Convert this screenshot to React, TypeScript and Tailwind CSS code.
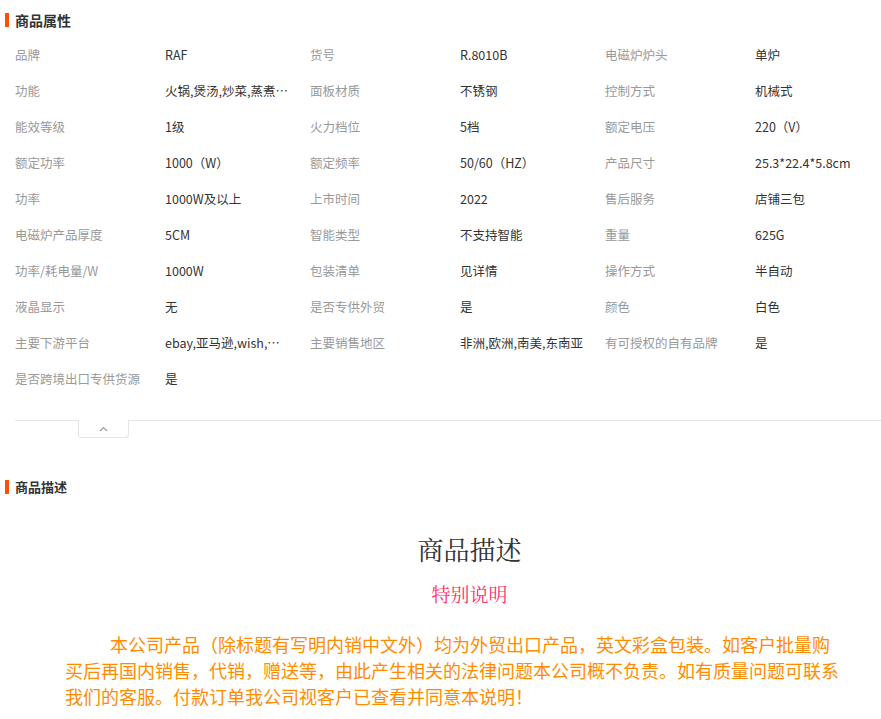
import React from 'react';

const rows: string[][] = [
  ['品牌', 'RAF', '货号', 'R.8010B', '电磁炉炉头', '单炉'],
  ['功能', '火锅,煲汤,炒菜,蒸煮,烧水', '面板材质', '不锈钢', '控制方式', '机械式'],
  ['能效等级', '1级', '火力档位', '5档', '额定电压', '220（V）'],
  ['额定功率', '1000（W）', '额定频率', '50/60（HZ）', '产品尺寸', '25.3*22.4*5.8cm'],
  ['功率', '1000W及以上', '上市时间', '2022', '售后服务', '店铺三包'],
  ['电磁炉产品厚度', '5CM', '智能类型', '不支持智能', '重量', '625G'],
  ['功率/耗电量/W', '1000W', '包装清单', '见详情', '操作方式', '半自动'],
  ['液晶显示', '无', '是否专供外贸', '是', '颜色', '白色'],
  ['主要下游平台', 'ebay,亚马逊,wish,速卖通', '主要销售地区', '非洲,欧洲,南美,东南亚', '有可授权的自有品牌', '是'],
  ['是否跨境出口专供货源', '是'],
];

const widths = ['w-[150px]', 'w-[145px]', 'w-[150px]', 'w-[145px]', 'w-[150px]', 'flex-1'];

export default function App() {
  return (
    <div className="w-[881px] h-[719px] overflow-hidden bg-white text-[12.5px]" style={{ fontFamily: '"Noto Sans CJK SC", "Noto Sans", sans-serif' }}>
      <div className="flex items-center pt-[10px] h-[30px]">
        <div className="w-[4px] h-[14px] bg-[#ff5000] ml-[5px]" />
        <div className="ml-[6px] text-[14px] font-bold text-[#333]">商品属性</div>
      </div>
      <div className="pl-[15px] pt-[7px]">
        {rows.map((r, i) => (
          <div key={i} className="flex h-[36px] items-center">
            {r.map((c, j) => (
              <div key={j} className={`${widths[j]} pr-[22px] truncate ${j % 2 === 0 ? 'text-[#999]' : 'text-[#333]'}`}>{c}</div>
            ))}
          </div>
        ))}
      </div>
      <div className="ml-[15px] mt-[23px] border-t border-[#e5e5e5] relative">
        <div className="absolute left-[63px] -top-px w-[51px] h-[18px] border border-t-0 border-[#e5e5e5] rounded-b-[3px] bg-white flex items-center justify-center">
          <svg width="9" height="6" viewBox="0 0 9 6"><path d="M1 5 L4.5 1.5 L8 5" fill="none" stroke="#999" strokeWidth="1.2" /></svg>
        </div>
      </div>
      <div className="flex items-center mt-[58px] h-[16px]">
        <div className="w-[4px] h-[14px] bg-[#ff5000] ml-[5px]" />
        <div className="ml-[6px] text-[13px] font-bold text-[#333]">商品描述</div>
      </div>
      <div className="pl-[58px]">
        <div className="text-center mt-[36px] text-[26px] text-[#333] leading-[36px]" style={{ fontFamily: '"Noto Serif CJK SC", "Liberation Serif", serif' }}>商品描述</div>
        <div className="text-center mt-[14px] text-[19px] text-[#ff2d6a] leading-[26px]" style={{ fontFamily: '"Noto Serif CJK SC", "Liberation Serif", serif' }}>特别说明</div>
      </div>
      <p className="ml-[65px] mt-[24px] w-[775px] text-[18px] leading-[26px] text-[#ff8c00] indent-[45px]">
        本公司产品（除标题有写明内销中文外）均为外贸出口产品，英文彩盒包装。如客户批量购买后再国内销售，代销，赠送等，由此产生相关的法律问题本公司概不负责。如有质量问题可联系我们的客服。付款订单我公司视客户已查看并同意本说明！
      </p>
    </div>
  );
}
